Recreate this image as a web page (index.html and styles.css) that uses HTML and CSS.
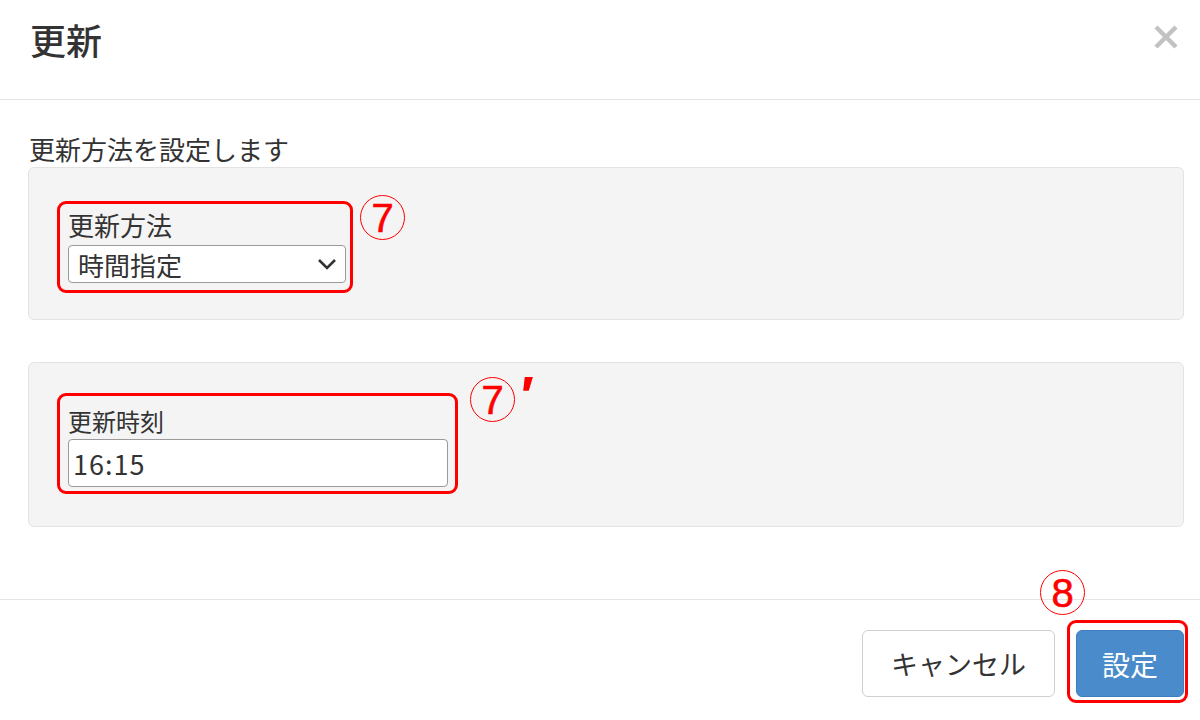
FILE: index.html
```html
<!DOCTYPE html>
<html lang="ja">
<head>
<meta charset="utf-8">
<title>更新</title>
<link rel="stylesheet" href="styles.css">
</head>
<body>
<div class="modal">
  <header class="modal-header">
    <h1 class="modal-title">更新</h1>
    <button class="close" aria-label="閉じる">
      <svg width="26" height="24" viewBox="0 0 26 24"><path d="M3 2 L23 22 M23 2 L3 22" stroke="#c2c2c2" stroke-width="4.5" stroke-linecap="butt" fill="none"/></svg>
    </button>
  </header>
  <main class="modal-body">
    <p class="lead">更新方法を設定します</p>
    <section class="panel panel-method">
      <div class="mark mark-method">
        <label class="field-label">更新方法</label>
        <div class="select">
          <span>時間指定</span>
          <svg class="chev" width="20" height="12" viewBox="0 0 20 12"><path d="M2 2 L10 10 L18 2" stroke="#333" stroke-width="2.6" fill="none"/></svg>
        </div>
        <span class="callout callout-7"><span class="num">7</span></span>
      </div>
    </section>
    <section class="panel panel-time">
      <div class="mark mark-time">
        <label class="field-label small">更新時刻</label>
        <div class="input">16:15</div>
        <span class="callout callout-7b"><span class="num">7</span></span>
        <span class="prime">′</span>
      </div>
    </section>
  </main>
  <footer class="modal-footer">
    <button class="btn btn-cancel">キャンセル</button>
    <div class="btn-wrap">
      <button class="btn btn-primary">設定</button>
      <span class="callout callout-8"><span class="num">8</span></span>
    </div>
  </footer>
</div>
</body>
</html>
```

FILE: styles.css
```css
* { box-sizing: border-box; }
html, body { margin: 0; padding: 0; background: #fff; }
body {
  font-family: "Noto Sans CJK JP", "Noto Sans", sans-serif;
  color: #333;
}
.modal {
  width: 1200px;
  height: 720px;
  display: flex;
  flex-direction: column;
}
.modal-header {
  height: 100px;
  border-bottom: 1px solid #e5e5e5;
  display: flex;
  justify-content: space-between;
  align-items: flex-start;
  padding: 21px 21px 0 30px;
}
.modal-title {
  margin: 0;
  font-size: 36px;
  line-height: 36px;
  font-weight: 500;
  color: #333;
}
.close {
  border: 0;
  background: none;
  padding: 0;
  margin-top: 4px;
  line-height: 0;
}
.modal-body {
  height: 499px;
  padding: 31px 16px 0 28px;
}
.lead {
  margin: 0;
  font-size: 26px;
  line-height: 36px;
  padding-left: 1px;
}
.panel {
  background: #f4f4f4;
  border: 1px solid #e3e3e3;
  border-radius: 6px;
  padding-left: 28px;
}
.panel-method {
  height: 153px;
  padding-top: 33px;
}
.panel-time {
  height: 165px;
  margin-top: 42px;
  padding-top: 30px;
}
.mark {
  position: relative;
  border: 3px solid #ff0000;
  border-radius: 9px;
}
.mark-method {
  width: 296px;
  height: 92px;
  padding: 4px 4px 0 8px;
}
.mark-time {
  width: 401px;
  height: 101px;
  padding: 9px 7px 0 8px;
}
.field-label {
  display: block;
  font-size: 26px;
  line-height: 34px;
}
.field-label.small {
  font-size: 24px;
  line-height: 32px;
}
.select {
  margin-top: 3px;
  height: 38px;
  background: #fff;
  border: 1px solid #9a9a9a;
  border-radius: 4px;
  display: flex;
  align-items: center;
  justify-content: space-between;
  padding: 0 8px 0 9px;
  font-size: 26px;
}
.chev { display: block; }
.input {
  margin-top: 2px;
  height: 48px;
  background: #fff;
  border: 1px solid #9a9a9a;
  border-radius: 4px;
  display: flex;
  align-items: center;
  padding: 0 0 0 4px;
  font-size: 27px;
  letter-spacing: 1px;
}
.callout {
  position: absolute;
  width: 45px;
  height: 45px;
  border: 1.5px solid #ff0000;
  border-radius: 50%;
  display: flex;
  align-items: center;
  justify-content: center;
  color: #ff0000;
}
.callout .num {
  font-family: "Liberation Sans", sans-serif;
  font-weight: 400;
  font-size: 40px;
  line-height: 1;
  -webkit-text-stroke: 0.6px #ff0000;
}
.callout-7 { left: 300px; top: -9px; }
.callout-7b { left: 410px; top: -19px; }
.prime {
  position: absolute;
  left: 458px;
  top: -32px;
  color: #ff0000;
  font-family: "Liberation Sans", sans-serif;
  font-size: 54px;
  font-weight: 700;
  font-style: italic;
}
.modal-footer {
  flex: 1;
  border-top: 1px solid #e5e5e5;
  display: flex;
  justify-content: flex-end;
  align-items: flex-start;
  padding: 30px 16px 0 0;
  gap: 21px;
}
.btn {
  height: 67px;
  border-radius: 6px;
  font-family: "Noto Sans CJK JP", sans-serif;
  font-size: 27px;
  padding: 0;
  cursor: pointer;
}
.btn-cancel {
  width: 193px;
  background: #fff;
  border: 1px solid #cfcfcf;
  color: #333;
}
.btn-wrap { position: relative; }
.btn-wrap::before {
  content: "";
  position: absolute;
  left: -9px;
  right: -4px;
  top: -10px;
  bottom: -6px;
  border: 3px solid #ff0000;
  border-radius: 9px;
}
.btn-primary {
  position: relative;
  width: 108px;
  background: #4a8bcb;
  border: 1px solid #3f7fbf;
  color: #fff;
  font-size: 28px;
}
.callout-8 { left: -36px; top: -60px; }
```
